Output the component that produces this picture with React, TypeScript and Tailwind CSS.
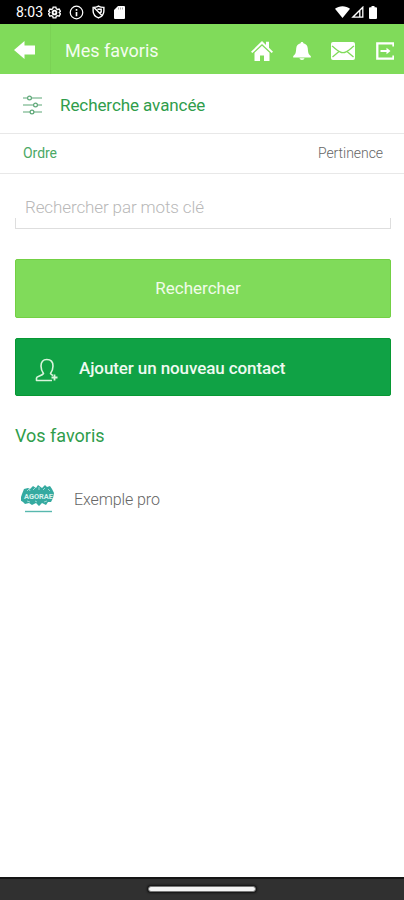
import React from 'react';

function StatusBar() {
  return (
    <div className="flex h-6 shrink-0 items-center justify-between bg-black pl-4 pr-[27px] text-white">
      <div className="flex items-center">
        <span className="w-[32px] text-[14px] leading-none">8:03</span>
        <svg className="h-[13px] w-[13px]" viewBox="0 0 24 24" fill="none" stroke="currentColor">
          <path
            d="M9.5 2h5l.8 3.2 2.2 1.2 3.1-.9 2.4 4.3-2.3 2.3 2.3 2.3-2.4 4.3-3.1-.9-2.2 1.2-.8 3h-5l-.8-3-2.2-1.2-3.1.9L1 14.4l2.3-2.3L1 9.8l2.4-4.3 3.1.9 2.2-1.2z"
            strokeWidth="2.5"
          />
          <circle cx="12" cy="12" r="3.5" strokeWidth="3.5" />
        </svg>
        <svg className="ml-2 h-[15px] w-[15px]" viewBox="0 0 24 24" fill="none" stroke="currentColor" strokeWidth="2">
          <circle cx="12" cy="12" r="10" />
          <path d="M12 6.5v2.5M12 11v7" strokeWidth="2.6" />
        </svg>
        <svg className="ml-2 h-[14px] w-[13px]" viewBox="0 0 24 26" fill="none" stroke="currentColor" strokeWidth="2.6">
          <path d="M12 2c3 2 6 2.500 10 2.500V11c0 6-4 10.500-10 13C6 21.500 2 17 2 11V4.500C6 4.500 9 4 12 2z" />
          <path d="M4 5l14 14M10 8h7v5l-4 2" />
        </svg>
        <svg className="ml-[9px] h-[13px] w-[11px]" viewBox="0 0 11 13" fill="currentColor">
          <path d="M4 0h6a1 1 0 0 1 1 1v11a1 1 0 0 1-1 1H1a1 1 0 0 1-1-1V4z" />
          <path d="M4.500 1.500v2M6.500 1.500v2M8.500 1.500v2" stroke="#777" strokeWidth=".6" />
        </svg>
      </div>
      <div className="flex items-center">
        <svg className="h-3 w-[15px]" viewBox="0 0 15 12" fill="currentColor">
          <path d="M0 2.800C4-.7 11-.7 15 2.800L7.500 12z" />
        </svg>
        <svg className="ml-px h-3 w-[13px]" viewBox="0 0 13 12" fill="none" stroke="currentColor" strokeWidth="1.300">
          <path d="M1.800 11.200H11.800V1.200zM8.800 4.500v6.500" />
        </svg>
        <svg className="ml-[5px] h-[13px] w-2" viewBox="0 0 8 13" fill="currentColor">
          <path d="M2.500 0h3v1.300H7a1 1 0 0 1 1 1V12a1 1 0 0 1-1 1H1a1 1 0 0 1-1-1V2.300a1 1 0 0 1 1-1h1.500z" />
        </svg>
      </div>
    </div>
  );
}

function Header() {
  return (
    <header className="flex h-[50px] shrink-0 items-center bg-[#80db5a] pr-[10px] text-white">
      <div className="flex h-full w-[51px] items-center border-r border-[#7bd255] pl-[14px] pt-0.5">
        <svg className="h-[18px] w-[22px]" viewBox="0 0 22 18" fill="currentColor">
          <path d="M0 9L10.500 0v4.500h10.500v9H10.500V18z" />
        </svg>
      </div>
      <h1 className="ml-[14px] flex-1 whitespace-nowrap pt-[3px] text-[18px] text-[#f4fdf0]">Mes favoris</h1>
      <nav className="flex items-center pt-1">
        <svg className="h-5 w-[22px]" viewBox="0 0 22 20" fill="currentColor">
          <path d="M11 0l4 4V.8h3v6l4 4-1.300 1.300L11 3 1.300 12.100 0 10.800z" />
          <path d="M11 4.800l7.500 7V20H13v-5.500H9V20H3.500v-8.200z" />
        </svg>
        <svg className="ml-[20px] h-[18px] w-[18px]" viewBox="0 0 18 18" fill="currentColor">
          <path d="M9 0c.9 0 1.300.5 1.400 1.200 2.600.5 4.200 2.500 4.400 5.300.2 4.500.9 6 3 7.500v1.500H.2V14c2.100-1.500 2.800-3 3-7.500.2-2.800 1.800-4.800 4.400-5.300C7.700.5 8.100 0 9 0zM6.500 16.300h5C11.200 17.500 10.300 18 9 18s-2.200-.5-2.500-1.700z" />
        </svg>
        <svg className="ml-5 h-[18px] w-6" viewBox="0 0 24 18">
          <rect width="24" height="18" rx="2" fill="currentColor" />
          <path
            d="M1 4c3 2 7 6.700 11 6.700S20 6 23 4M1.500 15l6.500-5.500M22.500 15L16 9.500"
            fill="none"
            stroke="#80db5a"
            strokeWidth="1.300"
          />
        </svg>
        <svg className="ml-[21px] h-[18px] w-[18px]" viewBox="0 0 18 18">
          <path d="M17.500 4.500V1.300H1.300v15.400h16.200V13.500" fill="none" stroke="currentColor" strokeWidth="2.300" />
          <path d="M4.500 8h6V5.800l4 3.200-4 3.200V10h-6z" fill="currentColor" />
        </svg>
      </nav>
    </header>
  );
}

function SearchForm() {
  return (
    <section>
      <div className="flex h-[60px] items-center border-b-[1.5px] border-[#e8e8e8] pl-[23px] pt-[3px] text-[#2f9d4b]">
        <svg
          className="h-[20px] w-[19px]"
          viewBox="0 0 19 20"
          fill="none"
          stroke="#5da777"
          strokeWidth="1.200">
          <path d="M0 3h4.500M8.500 3H19M0 10h10.500M14.500 10H19M0 17h7M11 17h8" />
          <circle cx="6.500" cy="3" r="1.900" />
          <circle cx="12.500" cy="10" r="1.900" />
          <circle cx="9" cy="17" r="1.900" />
        </svg>
        <span className="ml-[18px] pt-px text-[17px] tracking-[-0.08px]">Recherche avancée</span>
      </div>
      <div className="flex h-[40px] items-center justify-between border-b border-[#e8e8e8] pl-[23px] pr-[21px] text-[14px] tracking-[-0.05px]">
        <span className="text-[#4ba865]">Ordre</span>
        <span className="font-light text-[#666]">Pertinence</span>
      </div>
      <div className="ml-[15px] mr-[13px] flex h-[55px] flex-col justify-end">
        <div className="pl-[10px] text-[17px] font-light leading-5 tracking-[-0.11px] text-[#b8b8b8]">
          Rechercher par mots clé
        </div>
        <div className="mt-px h-[11px] border-x border-b-[1.5px] border-[#dedede]" />
      </div>
    </section>
  );
}

function Actions() {
  return (
    <div className="ml-[15px] mr-[13px] mt-[30px] flex flex-col gap-[20px] text-[17px] text-white">
      <button className="flex h-[59px] items-center justify-center rounded-[2px] border border-[#73d044] bg-[#80db5a] pr-2.5">
        <span className="text-[#f0fbe9]">Rechercher</span>
      </button>
      <button className="flex h-[58px] items-center rounded-[2px] border border-[#079833] bg-[#10a245] pl-[19px]">
        <svg
          className="mt-[5px] h-6 w-6"
          viewBox="0 0 24 24"
          fill="none"
          stroke="#d9f4dc"
          strokeWidth="1.600"
          strokeLinejoin="round">
          <path d="M17 22.500H1.500v-2.500c0-2 5.500-2 7-4.500-1.500-2-2.500-4-2.500-7.500C6 4 8 1.500 11.800 1.500S18 4 18 8c0 3.500-1 5.500-2.500 7.500.5 1 1.500 1.500 2.500 2" />
          <path d="M16.500 19.500h6M19.500 16.500v6" strokeWidth="1.800" />
        </svg>
        <span className="ml-[20px] pt-[3px] font-medium tracking-[-0.1px] text-[#effaf1]">
          Ajouter un nouveau contact
        </span>
      </button>
    </div>
  );
}

function ContactLogo() {
  return (
    <svg className="h-7 w-[35px]" viewBox="0 0 35 28">
      <path
        d="M1 9L3 4l4-1 2 1 3-3 3 2 2-3 4 3 3-3 2 2 3-1 2 3 2 4-1 5-2 4-3 0-2 3-4-2-3 3-3-3-4 2-3-2-4 1-2-2-3-2z"
        fill="#35aaa0"
      />
      <path
        d="M6 6l2-2 1 2M12 5l2-2M18 2v3M22 5l2-2M27 4l2 2M6 16l3 1M14 16l2 1M23 17l3-1"
        fill="none"
        stroke="#b5e5df"
        strokeWidth=".8"
      />
      <text
        x="3"
        y="13.500"
        fontSize="7.500"
        fontWeight="700"
        textLength="29"
        lengthAdjust="spacingAndGlyphs"
        fill="#d6f1ed">
        AGORAE
      </text>
      <path d="M4 26.500h27" stroke="#58b8ae" strokeWidth="1.400" />
    </svg>
  );
}

export default function App() {
  return (
    <div className="flex h-[900px] w-[404px] flex-col overflow-hidden bg-white font-['Roboto',sans-serif]">
      <StatusBar />
      <Header />
      <main className="flex-1">
        <SearchForm />
        <Actions />
        <h2 className="ml-[15px] mt-[28px] text-[18px] leading-6 text-[#2f9d4b]">Vos favoris</h2>
        <div className="ml-[21px] mt-[37px] flex items-center">
          <ContactLogo />
          <span className="ml-[18px] pt-0.5 text-[16px] font-light tracking-[-0.1px] text-[#666]">Exemple pro</span>
        </div>
      </main>
      <footer className="flex h-[23px] shrink-0 justify-center border-t-2 border-[#151515] bg-[#303030] pt-[7px]">
        <div className="h-[6px] w-[108px] rounded-full border border-[#777] bg-[#f4f4f4] shadow-[0_0_2px_1px_#111]" />
      </footer>
    </div>
  );
}
